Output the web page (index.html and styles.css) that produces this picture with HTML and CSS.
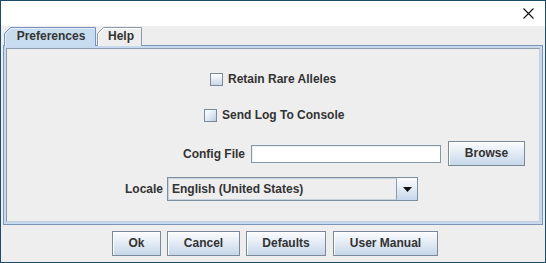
FILE: index.html
```html
<!DOCTYPE html>
<html>
<head>
<meta charset="utf-8">
<link rel="stylesheet" href="styles.css">
</head>
<body>
<div class="window">
  <div class="titlebar">
    <svg class="close" width="11" height="11" viewBox="0 0 11 11"><path d="M0.5 0.5 L10.5 10.5 M10.5 0.5 L0.5 10.5" stroke="#111" stroke-width="1.1" fill="none"/></svg>
  </div>
  <div class="tabs">
    <div class="tab tab-pref selected">
      <svg class="tab-shape" width="92" height="19" viewBox="0 0 92 19"><path d="M0.5 19 L0.5 6.5 L6.5 0.5 L91.5 0.5 L91.5 19" fill="#c8dcf0" stroke="#7892bd"/><path d="M1.5 19 L1.5 7 L7 1.5 L90.5 1.5" fill="none" stroke="#e4eef9"/></svg>
      <span class="tab-label">Preferences</span>
    </div>
    <div class="tab tab-help">
      <svg class="tab-shape" width="45" height="19" viewBox="0 0 45 19"><path d="M0.5 19 L0.5 6.5 L6.5 0.5 L44.5 0.5 L44.5 19" fill="#eeeeee" stroke="#8a9aae"/><path d="M1.5 19 L1.5 7 L7 1.5 L43.5 1.5" fill="none" stroke="#ffffff"/></svg>
      <span class="tab-label">Help</span>
    </div>
  </div>
  <div class="panel">
    <div class="panel-inner">
      <div class="row row-retain">
        <span class="checkbox"></span>
        <span class="label">Retain Rare Alleles</span>
      </div>
      <div class="row row-log">
        <span class="checkbox checkbox-hover"></span>
        <span class="label">Send Log To Console</span>
      </div>
      <div class="row row-config">
        <span class="label label-config">Config File</span>
        <span class="textfield"></span>
        <span class="button btn-browse">Browse</span>
      </div>
      <div class="row row-locale">
        <span class="label label-locale">Locale</span>
        <div class="combo">
          <span class="combo-value">English (United States)</span>
          <span class="combo-arrow"><svg width="9" height="5" viewBox="0 0 9 5"><path d="M0 0 L9 0 L4.5 5 Z" fill="#111"/></svg></span>
        </div>
      </div>
    </div>
  </div>
  <div class="buttons">
    <span class="button btn-ok">Ok</span>
    <span class="button btn-cancel">Cancel</span>
    <span class="button btn-defaults">Defaults</span>
    <span class="button btn-manual">User Manual</span>
  </div>
</div>
</body>
</html>
```

FILE: styles.css
```css
* { box-sizing: border-box; }
html, body { margin: 0; padding: 0; background: #eeeeee; }
body {
  font-family: "Liberation Sans", Arial, sans-serif;
  font-size: 12px;
  font-weight: bold;
  color: #333333;
}
.window {
  width: 546px;
  height: 263px;
  border: 1px solid #1d4b68;
  background: #eeeeee;
  display: flex;
  flex-direction: column;
}
.titlebar {
  height: 25px;
  background: #ffffff;
  display: flex;
  justify-content: flex-end;
  align-items: flex-start;
  padding: 7px 11px 0 0;
}
.tabs {
  display: flex;
  margin-top: 1px;
  padding-left: 3px;
  height: 19px;
  position: relative;
  z-index: 2;
  margin-bottom: -1px;
}
.tab {
  position: relative;
  height: 19px;
  display: flex;
  align-items: center;
  justify-content: center;
}
.tab-pref { width: 92px; }
.tab-help { width: 45px; margin-left: 1px; }
.tab-shape { position: absolute; left: 0; top: 0; }
.tab-label { position: relative; padding-bottom: 1px; }
.tab-pref .tab-label { padding-left: 2px; }
.tab-help .tab-label { padding-left: 3px; }
.panel {
  margin: 0 2px;
  height: 180px;
  border: 1px solid #7d95b9;
  background: #c7d9ee;
  padding: 2px;
  display: flex;
}
.panel-inner {
  flex: 1;
  border: 1px solid #8e9bab;
  border-right-color: #c3cfdc;
  border-bottom-color: #c3cfdc;
  background: #eeeeee;
  display: flex;
  flex-direction: column;
  padding-top: 21px;
}
.row {
  display: flex;
  align-items: center;
}
.row-retain { height: 18px; padding-left: 203px; }
.row-log { height: 18px; margin-top: 18px; padding-left: 197px; }
.row-config { height: 25px; margin-top: 17px; }
.row-locale { height: 24px; margin-top: 11px; }
.checkbox {
  width: 13px;
  height: 13px;
  border: 1px solid #7a8a99;
  background: linear-gradient(to bottom, #ffffff, #c8d8ea);
  margin-right: 5px;
  flex: none;
}
.checkbox-hover {
  background: linear-gradient(135deg, #ffffff 0%, #e6eef7 45%, #b9cde3 100%);
}
.label { white-space: nowrap; }
.label-config { width: 238px; text-align: right; margin-right: 6px; }
.label-locale { width: 156px; text-align: right; margin-right: 4px; }
.textfield {
  width: 190px;
  height: 18px;
  background: #ffffff;
  border: 1px solid #8796a8;
  box-shadow: inset 1px 1px 0 #e8edf2;
  margin-right: 7px;
}
.button {
  display: flex;
  align-items: center;
  justify-content: center;
  height: 25px;
  border: 1px solid #7a8a99;
  background: linear-gradient(to bottom, #fbfcfe 0%, #e7eef6 40%, #c6d7ea 100%);
  box-shadow: inset 1px 1px 0 #ffffff;
  color: #333333;
  padding-bottom: 1px;
}
.btn-browse { width: 77px; }
.combo {
  width: 251px;
  height: 24px;
  border: 1px solid #7f8fa2;
  display: flex;
  background: #eeeeee;
}
.combo-value {
  flex: 1;
  display: flex;
  align-items: center;
  padding-left: 3px;
  border: 1px solid #c8d2dc;
  border-right: 1px solid #8b9bb0;
  padding-bottom: 1px;
}
.combo-arrow {
  width: 20px;
  display: flex;
  align-items: center;
  justify-content: center;
  background: linear-gradient(to bottom, #fbfcfe 0%, #e7eef6 40%, #c6d7ea 100%);
  padding-top: 1px;
}
.buttons {
  display: flex;
  margin-top: 6px;
  padding-left: 111px;
  gap: 6px;
}
.btn-ok { width: 49px; }
.btn-cancel { width: 73px; }
.btn-defaults { width: 80px; }
.btn-manual { width: 105px; margin-left: 1px; }
```
